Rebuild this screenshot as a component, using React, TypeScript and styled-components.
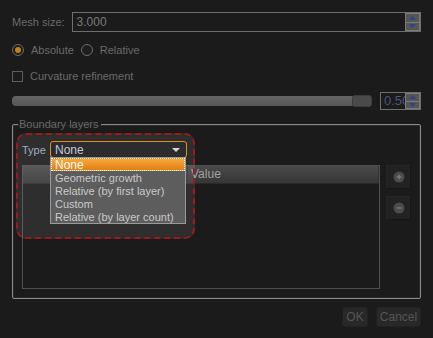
import styled, { createGlobalStyle } from "styled-components";

const GlobalStyle = createGlobalStyle`
  body {
    margin: 0;
    background: #1b1b1b;
    font-family: "Liberation Sans", Arial, sans-serif;
  }
`

const items = [
  "None",
  "Geometric growth",
  "Relative (by first layer)",
  "Custom",
  "Relative (by layer count)",
]

function SpinArrows() {
  return (
    <SpinButtons>
      <SpinHalf>
        <svg width="7" height="4" viewBox="0 0 7 4">
          <polygon points="0,4 3.5,0 7,4" fill="#33428a" />
        </svg>
      </SpinHalf>
      <SpinHalf>
        <svg width="7" height="4" viewBox="0 0 7 4">
          <polygon points="0,0 7,0 3.5,4" fill="#33428a" />
        </svg>
      </SpinHalf>
    </SpinButtons>
  )
}

function App() {
  return (
    <>
      <GlobalStyle />
      <Dialog>
        <MeshRow>
          <Label>Mesh size:</Label>
          <SpinBox>
            <SpinText>3.000</SpinText>
            <SpinArrows />
          </SpinBox>
        </MeshRow>

        <RadioRow>
          <Radio $checked />
          <Label>Absolute</Label>
          <Radio />
          <Label>Relative</Label>
        </RadioRow>

        <CheckRow>
          <CheckBox />
          <Label>Curvature refinement</Label>
        </CheckRow>

        <SliderRow>
          <Track>
            <Handle />
          </Track>
          <SpinBox $width={41} $height={18}>
            <SmallSpinText>0.500</SmallSpinText>
            <SpinArrows />
          </SpinBox>
        </SliderRow>

        <Group>
          <Legend>Boundary layers</Legend>
          <GroupBody>
            <Highlight />
            <TypeRow>
              <TypeLabel>Type</TypeLabel>
              <Combo>
                <ComboText>None</ComboText>
                <svg width="8" height="4" viewBox="0 0 8 4">
                  <polygon points="0,0 8,0 4,4" fill="#d8d8d8" />
                </svg>
                <DropList>
                  {items.map((item, i) => (
                    <DropItem key={item} $selected={i === 0}>
                      {item}
                    </DropItem>
                  ))}
                </DropList>
              </Combo>
            </TypeRow>
            <ContentRow>
              <Table>
                <TableHeader>
                  <HeaderCell $width={161} />
                  <HeaderCell>Value</HeaderCell>
                </TableHeader>
              </Table>
              <SideButtons>
                <SideButton>
                  <svg width="12" height="12" viewBox="0 0 12 12">
                    <circle cx="6" cy="6" r="5.5" fill="#4b4b4b" />
                    <path d="M3.5 6h5M6 3.5v5" stroke="#7a7a7a" strokeWidth="1.4" />
                  </svg>
                </SideButton>
                <SideButton>
                  <svg width="12" height="12" viewBox="0 0 12 12">
                    <circle cx="6" cy="6" r="5.5" fill="#4b4b4b" />
                    <path d="M3.5 6h5" stroke="#7a7a7a" strokeWidth="1.4" />
                  </svg>
                </SideButton>
              </SideButtons>
            </ContentRow>
          </GroupBody>
        </Group>

        <ButtonRow>
          <DialogButton $width={26}>OK</DialogButton>
          <DialogButton $width={45}>Cancel</DialogButton>
        </ButtonRow>
      </Dialog>
    </>
  )
}

const Dialog = styled.div`
  width: 433px;
  height: 338px;
  box-sizing: border-box;
  padding: 12px 12px 0 12px;
  display: flex;
  flex-direction: column;
  background: #1b1b1b;
`

const Label = styled.span`
  color: #6a6a6a;
  font-size: 11px;
  line-height: 14px;
  white-space: nowrap;
`

const MeshRow = styled.div`
  display: flex;
  align-items: center;
  gap: 7px;
  height: 20px;
`

const SpinBox = styled.div<{ $width?: number; $height?: number }>`
  ${(p) => (p.$width ? `width: ${p.$width}px;` : "flex: 1;")}
  height: ${(p) => p.$height ?? 20}px;
  box-sizing: border-box;
  border: 1px solid #6e6e6e;
  background: #1b1b1b;
  display: flex;
  flex-shrink: 0;
`

const SpinText = styled.div`
  flex: 1;
  padding-left: 4px;
  color: #7a7a7a;
  font-size: 12px;
  line-height: 18px;
`

const SmallSpinText = styled.div`
  flex: 1;
  min-width: 0;
  overflow: hidden;
  white-space: nowrap;
  padding-left: 3px;
  color: #4a5878;
  font-size: 13px;
  line-height: 16px;
`

const SpinButtons = styled.div`
  width: 15px;
  box-sizing: border-box;
  display: flex;
  flex-direction: column;
  gap: 1px;
  padding: 1px;
  background: #7a7a7a;
`

const SpinHalf = styled.div`
  flex: 1;
  background: #565656;
  display: flex;
  align-items: center;
  justify-content: center;
`

const RadioRow = styled.div`
  display: flex;
  align-items: center;
  height: 14px;
  margin-top: 11px;

  & > span {
    margin: 0 7px 0 7px;
  }
`

const Radio = styled.div<{ $checked?: boolean }>`
  width: 12px;
  height: 12px;
  box-sizing: border-box;
  border-radius: 50%;
  border: 1px solid #6c6c6c;
  background: #1e1e1e;
  display: flex;
  align-items: center;
  justify-content: center;

  &::after {
    content: "";
    width: 6px;
    height: 6px;
    border-radius: 50%;
    background: ${(p) => (p.$checked ? "#c08412" : "transparent")};
  }
`

const CheckRow = styled.div`
  display: flex;
  align-items: center;
  gap: 7px;
  height: 14px;
  margin-top: 12px;
`

const CheckBox = styled.div`
  width: 11px;
  height: 11px;
  box-sizing: border-box;
  border: 1px solid #5e5e5e;
`

const SliderRow = styled.div`
  display: flex;
  align-items: center;
  gap: 8px;
  height: 18px;
  margin-top: 9px;
`

const Track = styled.div`
  flex: 1;
  height: 10px;
  border-radius: 4px;
  background: linear-gradient(#646464, #565656);
  display: flex;
  align-items: center;
  justify-content: flex-end;
`

const Handle = styled.div`
  width: 20px;
  height: 12px;
  box-sizing: border-box;
  border-radius: 3px;
  border: 1px solid #3c3c3c;
  background: #4a4a4a;
`

const Group = styled.fieldset`
  margin: 7px 0 0;
  padding: 10px 9px 9px;
  border: 1px solid #8a8a8a;
  border-radius: 2px;
  min-width: 0;
  box-shadow: inset 0 0 0 1px #2a2a2a;
`

const Legend = styled.legend`
  margin-left: -4px;
  padding: 0 2px 0 1px;
  color: #686868;
  font-size: 11px;
  line-height: 14px;
`

const GroupBody = styled.div`
  position: relative;
  display: flex;
  flex-direction: column;
  gap: 7px;
`

const Highlight = styled.div`
  position: absolute;
  left: -6px;
  top: -8px;
  width: 179px;
  height: 106px;
  box-sizing: border-box;
  border: 2px dashed #a01818;
  border-radius: 10px;
  background: rgba(255, 255, 255, 0.085);
  pointer-events: none;
  z-index: 1;
`

const TypeRow = styled.div`
  display: flex;
  align-items: center;
  gap: 5px;
  height: 17px;
`

const TypeLabel = styled.span`
  color: #98a2c0;
  font-size: 11px;
  width: 23px;
`

const Combo = styled.div`
  position: relative;
  z-index: 2;
  width: 137px;
  height: 17px;
  box-sizing: border-box;
  border: 1.5px solid #e28e1c;
  border-radius: 3px;
  background: #2c2c2c;
  display: flex;
  align-items: center;
  padding: 0 6px 0 4px;
`

const ComboText = styled.span`
  flex: 1;
  color: #c2c8dc;
  font-size: 12px;
`

const DropList = styled.div`
  position: absolute;
  top: 15px;
  left: -1px;
  width: 136px;
  box-sizing: border-box;
  border: 1px solid #9a9a9a;
  background: #5d5d5d;
`

const DropItem = styled.div<{ $selected?: boolean }>`
  height: 13px;
  box-sizing: border-box;
  padding-left: 3px;
  font-size: 11px;
  line-height: 12px;
  white-space: nowrap;
  color: ${(p) => (p.$selected ? "#ffffff" : "#c9c9c9")};
  background: ${(p) => (p.$selected ? "linear-gradient(#f8a83c, #e27e14)" : "transparent")};
  border: 1px dotted ${(p) => (p.$selected ? "#ffffff" : "transparent")};
  ${(p) => (p.$selected ? "font-size: 12px;" : "")}
`

const ContentRow = styled.div`
  display: flex;
  gap: 6px;
  height: 124px;
`

const Table = styled.div`
  flex: 1;
  box-sizing: border-box;
  border: 1px solid #4e4e4e;
`

const TableHeader = styled.div`
  display: flex;
  height: 17px;
  background: linear-gradient(#4a4a4a, #363636);
  border-bottom: 1px solid #2a2a2a;
`

const HeaderCell = styled.div<{ $width?: number }>`
  ${(p) => (p.$width ? `width: ${p.$width}px;` : "flex: 1;")}
  padding-left: 3px;
  color: #a2a2a2;
  font-size: 12px;
  line-height: 17px;
  border-right: 1px solid #333;
`

const SideButtons = styled.div`
  width: 25px;
  display: flex;
  flex-direction: column;
  gap: 7px;
`

const SideButton = styled.div`
  height: 24px;
  box-sizing: border-box;
  background: #222;
  border: 1px solid #161616;
  border-top-color: #262626;
  border-left-color: #262626;
  display: flex;
  align-items: center;
  justify-content: center;
`

const ButtonRow = styled.div`
  display: flex;
  justify-content: flex-end;
  gap: 8px;
  margin-top: 8px;
`

const DialogButton = styled.div<{ $width: number }>`
  width: ${(p) => p.$width}px;
  height: 20px;
  box-sizing: border-box;
  border-radius: 3px;
  background: #282828;
  border: 1px solid #222;
  color: #555;
  font-size: 12px;
  line-height: 18px;
  text-align: center;
`

export default App
